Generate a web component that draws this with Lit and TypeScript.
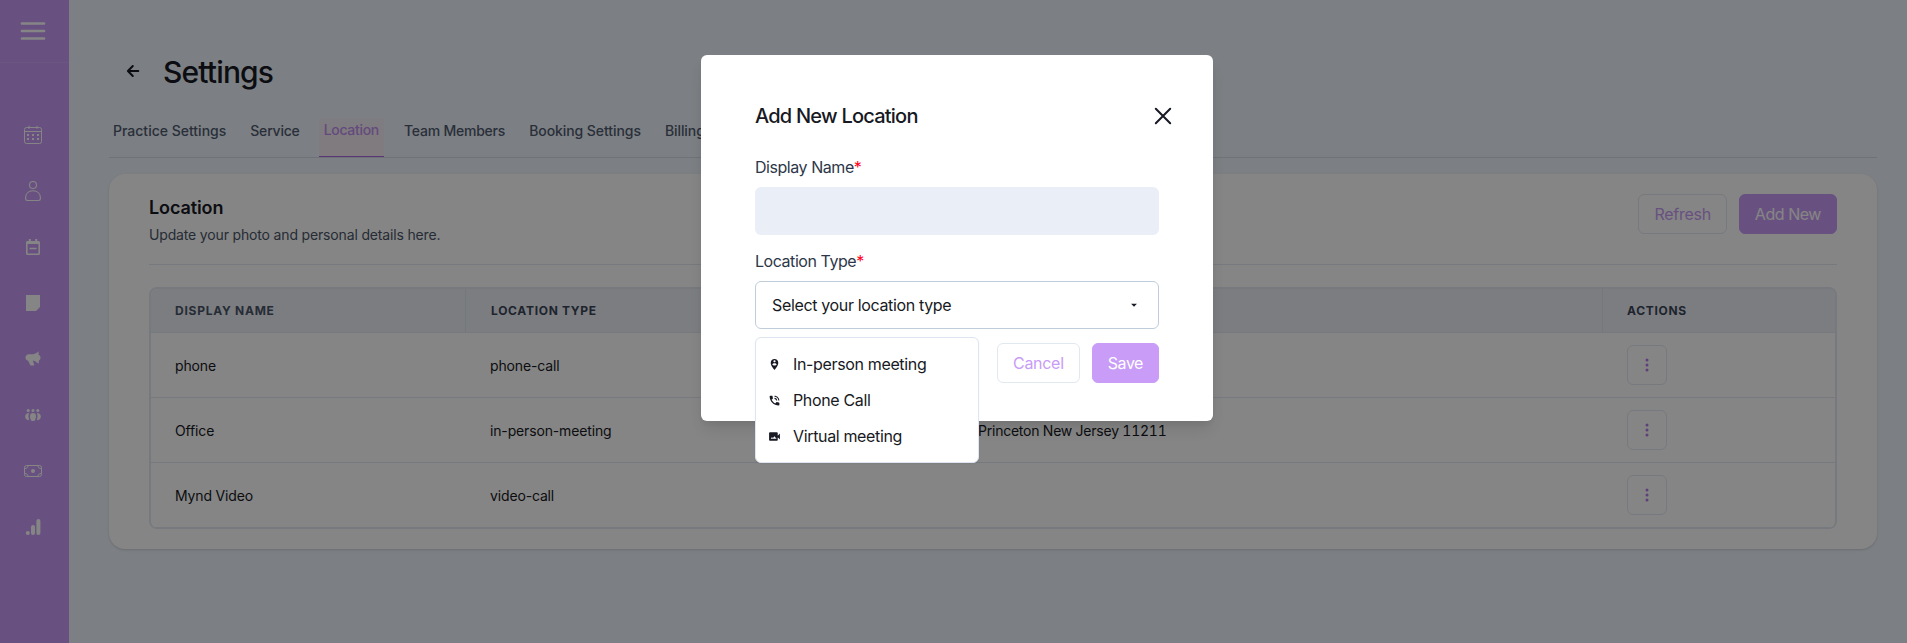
import { LitElement, html, css, svg } from "lit";
import { customElement } from "lit/decorators.js";

interface Row {
  name: string;
  type: string;
  address: string;
}

const rows: Row[] = [
  { name: "phone", type: "phone-call", address: "" },
  { name: "Office", type: "in-person-meeting", address: "Princeton New Jersey 11211" },
  { name: "Mynd Video", type: "video-call", address: "" },
];

const tabs = ["Practice Settings", "Service", "Location", "Team Members", "Booking Settings", "Billing"];

const navIcons = [
  svg`<g fill="none" stroke="currentColor" stroke-width="1"><rect x="1.5" y="2.5" width="17" height="16" rx="2"/><path d="M1.5 6.5h17M6 .8v3M14 .8v3"/></g><path fill="currentColor" d="M4 9h2v2H4zM9 9h2v2H9zM14 9h2v2h-2zM4 13h2v2H4zM9 13h2v2H9zM14 13h2v2h-2z"/>`,
  svg`<g fill="none" stroke="currentColor" stroke-width="1.100"><circle cx="10" cy="4" r="3.500"/><path d="M2.500 17.200c0-4.500 3-7.400 7.500-7.400s7.500 2.900 7.500 7.400c0 1.500-.7 2.300-2.200 2.300H4.700c-1.500 0-2.200-.8-2.200-2.300z"/></g>`,
  svg`<path fill="currentColor" fill-rule="evenodd" d="M5.800 2h2v2h4.400V2h2v2h1.300c.8 0 1.500.7 1.500 1.500v11c0 .8-.7 1.500-1.500 1.500h-11c-.8 0-1.500-.7-1.500-1.500v-11C3 4.700 3.700 4 4.500 4h1.300zM4.600 7v9.400h10.800V7zM6.500 10.800h7v1.400h-7z"/>`,
  svg`<path fill="currentColor" d="M3 2h14v12l-4 4H3z"/>`,
  svg`<path fill="currentColor" d="M15.600 2.200v3.900c1.300.3 1.900 1.200 1.900 2.600s-.6 2.200-1.500 2.500l-.4 3.500-4.300-2.900-1.600-.1 1.600 4-.6.9H7.500L5 11.500C3.300 11.200 2.500 10.200 2.500 8.500 2.500 6.500 4 5.200 6 5.200h3.500c2.500-.2 4.200-1.200 6.100-3z"/>`,
  svg`<g fill="currentColor"><circle cx="5.200" cy="5.600" r="1.500"/><circle cx="10" cy="5.600" r="1.500"/><circle cx="14.800" cy="5.600" r="1.500"/><path d="M6.200 8c-2.300 0-4 1.300-4 3.600 0 2.100 1.300 3.600 3.200 3.600l.8-.9c-1-2.200-1-4.500 0-6.300zM13.800 8c2.300 0 4 1.300 4 3.600 0 2.100-1.300 3.600-3.200 3.600l-.8-.9c1-2.200 1-4.500 0-6.300z"/><path d="M10 8c1.900 0 3 1.100 3 3 0 2.500-1 4.700-1.800 4.900H8.800C8 15.700 7 13.500 7 11c0-1.900 1.100-3 3-3z"/></g>`,
  svg`<g fill="none" stroke="currentColor" stroke-width="1"><rect x="1.500" y="4.500" width="17" height="11" rx="2"/><path d="M5 4.800c0 1.600-1.300 2.700-3.200 2.700M15 4.800c0 1.600 1.300 2.700 3.200 2.700M5 15.200c0-1.600-1.300-2.700-3.200-2.700M15 15.200c0-1.600 1.300-2.700 3.200-2.700"/></g><circle cx="10" cy="10" r="2" fill="currentColor"/>`,
  svg`<g fill="currentColor"><circle cx="4.800" cy="15.900" r="2"/><rect x="8" y="8" width="4" height="10" rx="2"/><rect x="13.400" y="2" width="4" height="16" rx="2"/></g>`,
];

const locationTypes = [
  {
    label: "In-person meeting",
    icon: svg`<path fill-rule="evenodd" d="M12 2C8.140 2 5 5.140 5 9c0 5.250 7 13 7 13s7-7.750 7-13c0-3.860-3.140-7-7-7zm0 2c1.100 0 2 .9 2 2 0 1.110-.9 2-2 2s-2-.89-2-2c0-1.100.9-2 2-2zm0 10c-1.670 0-3.140-.85-4-2.150.02-1.320 2.670-2.050 4-2.050s3.980.73 4 2.050c-.86 1.300-2.330 2.150-4 2.150z"/>`,
  },
  {
    label: "Phone Call",
    icon: svg`<path d="M20 15.500c-1.250 0-2.450-.2-3.570-.57-.35-.11-.74-.03-1.020.24l-2.200 2.200c-2.830-1.440-5.150-3.750-6.590-6.590l2.200-2.210c.28-.26.36-.65.25-1C8.700 6.450 8.500 5.250 8.500 4c0-.55-.45-1-1-1H4c-.55 0-1 .45-1 1 0 9.390 7.610 17 17 17 .55 0 1-.45 1-1v-3.500c0-.55-.45-1-1-1zM19 12h2c0-4.970-4.030-9-9-9v2c3.870 0 7 3.130 7 7zm-4 0h2c0-2.760-2.240-5-5-5v2c1.660 0 3 1.340 3 3z"/>`,
  },
  {
    label: "Virtual meeting",
    icon: svg`<path fill-rule="evenodd" d="M18 10.480V6c0-1.100-.9-2-2-2H4c-1.100 0-2 .9-2 2v12c0 1.100.9 2 2 2h12c1.100 0 2-.9 2-2v-4.480l4 3.980v-11l-4 3.980zM5 16l2.380-3.170L9 15l2.620-3.500L16 16H5z"/>`,
  },
];

@customElement("app-root")
export class AppRoot extends LitElement {
  static styles = css`
    :host {
      display: block;
      position: relative;
      height: 100vh;
      overflow: hidden;
      font-family: Inter, "Liberation Sans", sans-serif;
      font-size: 16px;
      line-height: 24px;
      letter-spacing: -.35px;
      color: #171923;
    }
    * { box-sizing: border-box; }
    svg { display: block; flex: none; }
    button { font: inherit; letter-spacing: inherit; margin: 0; }
    h1, h2, p { margin: 0; }
    .layout { display: flex; height: 100%; background: #eef4fb; }
    .sidebar { width: 69px; flex: none; background: #c89cf7; color: #fff; padding-right: 3px; display: flex; flex-direction: column; }
    .menu-toggle { height: 63px; display: flex; justify-content: center; padding-top: 19px; border-bottom: 1px solid #cda6f7; margin-right: -3px; padding-right: 3px; }
    .nav { display: flex; flex-direction: column; align-items: center; padding-top: 44px; }
    .nav-item { height: 56px; width: 56px; display: grid; place-items: center; }
    .main { flex: 1; min-width: 0; padding: 52px 30px 0 40px; }
    .heading { display: flex; align-items: center; height: 40px; padding-left: 17px; gap: 23px; }
    .heading h1 { font-size: 30px; line-height: 40px; font-weight: 500; letter-spacing: -.85px; }
    .back { padding-bottom: 2px; }
    .tabs { display: flex; margin-top: 26px; height: 40px; border-bottom: 1px solid #d3dce5; color: #4f5b70; gap: 16px; font-size: 14px; font-weight: 450; letter-spacing: -.07px; }
    .tab { padding: 1px 4px 0; line-height: 24px; white-space: nowrap; }
    .tab:first-child { letter-spacing: 0; }
    .tab:nth-child(2) { letter-spacing: -.2px; }
    .tab.active { padding: 0 5px; margin-left: -1px; height: 39px; color: #c08eee; background: linear-gradient(#f0eff8, #f6ebf4 50%); border-bottom: 1px solid #b266e8; letter-spacing: -.3px; }
    .tab.active + .tab { letter-spacing: -.22px; }
    .card { margin-top: 16px; height: 375px; padding: 20px 40px; background: #fff; border-radius: 16px; box-shadow: 0 1px 3px rgba(0, 0, 0, .1), 0 1px 2px rgba(0, 0, 0, .06); }
    .card-head { display: flex; justify-content: space-between; height: 71px; border-bottom: 1px solid #e2e8f0; }
    .card-head h2 { font-size: 18px; line-height: 28px; font-weight: 600; letter-spacing: -.1px; }
    .card-head p { font-size: 14px; line-height: 20px; margin-top: 3px; color: #4a5568; letter-spacing: -.16px; }
    .actions { display: flex; gap: 12px; }
    .btn { height: 40px; padding: 0 15px; border-radius: 6px; border: 1px solid #e2e8f0; background: transparent; color: #c89cf7; letter-spacing: -.28px; }
    .btn.solid { border-color: #c89cf7; background: #c89cf7; color: #fff; letter-spacing: -.45px; }
    .table { margin-top: 22px; border: 2px solid #e2e8f0; border-bottom-width: 1px; border-radius: 8px; overflow: hidden; font-size: 14px; letter-spacing: -.15px; }
    .tr { display: grid; grid-template-columns: 315px 487px 1fr 232px; height: 65px; align-items: center; border-bottom: 1px solid #e2e8f0; }
    .tr.head { height: 44px; background: #edf0f7; align-items: stretch; font-size: 12px; font-weight: 700; letter-spacing: .7px; color: #4a5568; }
    .th { display: flex; align-items: center; padding-left: 24px; border-right: 1px solid #dfe5ee; padding-top: 1px; }
    .th + .th { padding-left: 25px; color: #3b4658; }
    .th:first-child { letter-spacing: .75px; }
    .th:last-child { border-right: 0; padding-left: 24px; }
    .td { padding-left: 24px; padding-top: 2px; white-space: nowrap; }
    .td.address { padding-left: 25px; font-variant-numeric: tabular-nums; letter-spacing: -.23px; }
    .td.act { padding: 0 0 0 24px; }
    .kebab { width: 40px; height: 40px; border: 1px solid #e2e8f0; border-radius: 6px; display: grid; place-items: center; background: transparent; color: #b57ae8; padding: 0; }
    .overlay { position: absolute; inset: 0; background: rgba(0, 0, 0, .48); display: flex; justify-content: center; align-items: flex-start; padding: 55px 0 0 7px; }
    .modal { position: relative; width: 512px; height: 366px; background: #fff; border-radius: 6px; padding: 46px 54px 0; box-shadow: 0 10px 15px -3px rgba(0, 0, 0, .1), 0 4px 6px -2px rgba(0, 0, 0, .05); }
    .modal-head { display: flex; align-items: center; justify-content: space-between; height: 30px; margin-right: -13px; }
    .modal-head h2 { font-size: 20px; line-height: 30px; font-weight: 500; letter-spacing: -.77px; }
    .field { margin-top: 24px; }
    .field + .field { margin-top: 14px; }
    .label { height: 24px; color: #2d3748; letter-spacing: -.45px; }
    .req { color: #ff0022; }
    .input { height: 48px; margin-top: 8px; border-radius: 6px; background: #eaeef7; }
    .select { position: relative; height: 48px; margin-top: 8px; padding: 0 17px 0 16px; border-radius: 6px; border: 1px solid #bfcddb; display: flex; align-items: center; justify-content: space-between; }
    .options { position: absolute; left: -1px; top: 55px; width: 224px; height: 126px; padding: 8px 0; background: #fff; border: 1px solid #dde6f0; border-radius: 6px; box-shadow: 0 1px 2px rgba(0, 0, 0, .05); }
    .option { display: flex; align-items: center; gap: 12px; height: 36px; padding: 0 12px; }
    .modal-foot { display: flex; justify-content: flex-end; gap: 12px; margin-top: 14px; }
  `;

  render() {
    return html`
      <div class="layout">
        <div class="sidebar">
          <div class="menu-toggle">
            <svg width="26" height="24" viewBox="0 0 26 24" fill="none" stroke="currentColor" stroke-width="2.700" stroke-linecap="round"><path d="M2 4.500h22M2 12h22M2 19.500h22" /></svg>
          </div>
          <div class="nav">
            ${navIcons.map((icon) => html`<div class="nav-item"><svg width="20" height="20" viewBox="0 0 20 20">${icon}</svg></div>`)}
          </div>
        </div>
        <div class="main">
          <div class="heading">
            <div class="back">
              <svg width="14" height="14" viewBox="0 0 14 14" fill="none" stroke="currentColor" stroke-width="2" stroke-linecap="round" stroke-linejoin="round"><path d="M12.300 7H2M6.800 2 1.900 7l4.900 5" /></svg>
            </div>
            <h1>Settings</h1>
          </div>
          <div class="tabs">
            ${tabs.map((t) => html`<div class="tab ${t === "Location" ? "active" : ""}">${t}</div>`)}
          </div>
          <div class="card">
            <div class="card-head">
              <div>
                <h2>Location</h2>
                <p>Update your photo and personal details here.</p>
              </div>
              <div class="actions">
                <button class="btn">Refresh</button>
                <button class="btn solid">Add New</button>
              </div>
            </div>
            <div class="table">
              <div class="tr head">
                <div class="th">DISPLAY NAME</div>
                <div class="th">LOCATION TYPE</div>
                <div class="th"></div>
                <div class="th">ACTIONS</div>
              </div>
              ${rows.map(
                (r) => html`<div class="tr">
                  <div class="td">${r.name}</div>
                  <div class="td">${r.type}</div>
                  <div class="td address">${r.address}</div>
                  <div class="td act">
                    <button class="kebab"><svg width="4" height="14" viewBox="0 0 4 14" fill="currentColor"><circle cx="2" cy="2" r="1.500" /><circle cx="2" cy="7" r="1.500" /><circle cx="2" cy="12" r="1.500" /></svg></button>
                  </div>
                </div>`
              )}
            </div>
          </div>
        </div>
      </div>
      <div class="overlay">
        <div class="modal">
          <div class="modal-head">
            <h2>Add New Location</h2>
            <svg width="18" height="18" viewBox="0 0 18 18" fill="none" stroke="currentColor" stroke-width="2" stroke-linecap="round"><path d="m1.800 1.800 14.400 14.400M16.200 1.800 1.800 16.200" /></svg>
          </div>
          <div class="field">
            <div class="label">Display Name<span class="req">*</span></div>
            <div class="input"></div>
          </div>
          <div class="field">
            <div class="label">Location Type<span class="req">*</span></div>
            <div class="select">
              <span>Select your location type</span>
              <svg width="14" height="14" viewBox="0 0 24 24" fill="currentColor"><path d="m7 10 5 5 5-5z" /></svg>
              <div class="options">
                ${locationTypes.map(
                  (o) => html`<div class="option"><svg width="13" height="13" viewBox="0 0 24 24" fill="currentColor">${o.icon}</svg><span>${o.label}</span></div>`
                )}
              </div>
            </div>
          </div>
          <div class="modal-foot">
            <button class="btn">Cancel</button>
            <button class="btn solid">Save</button>
          </div>
        </div>
      </div>
    `;
  }
}
